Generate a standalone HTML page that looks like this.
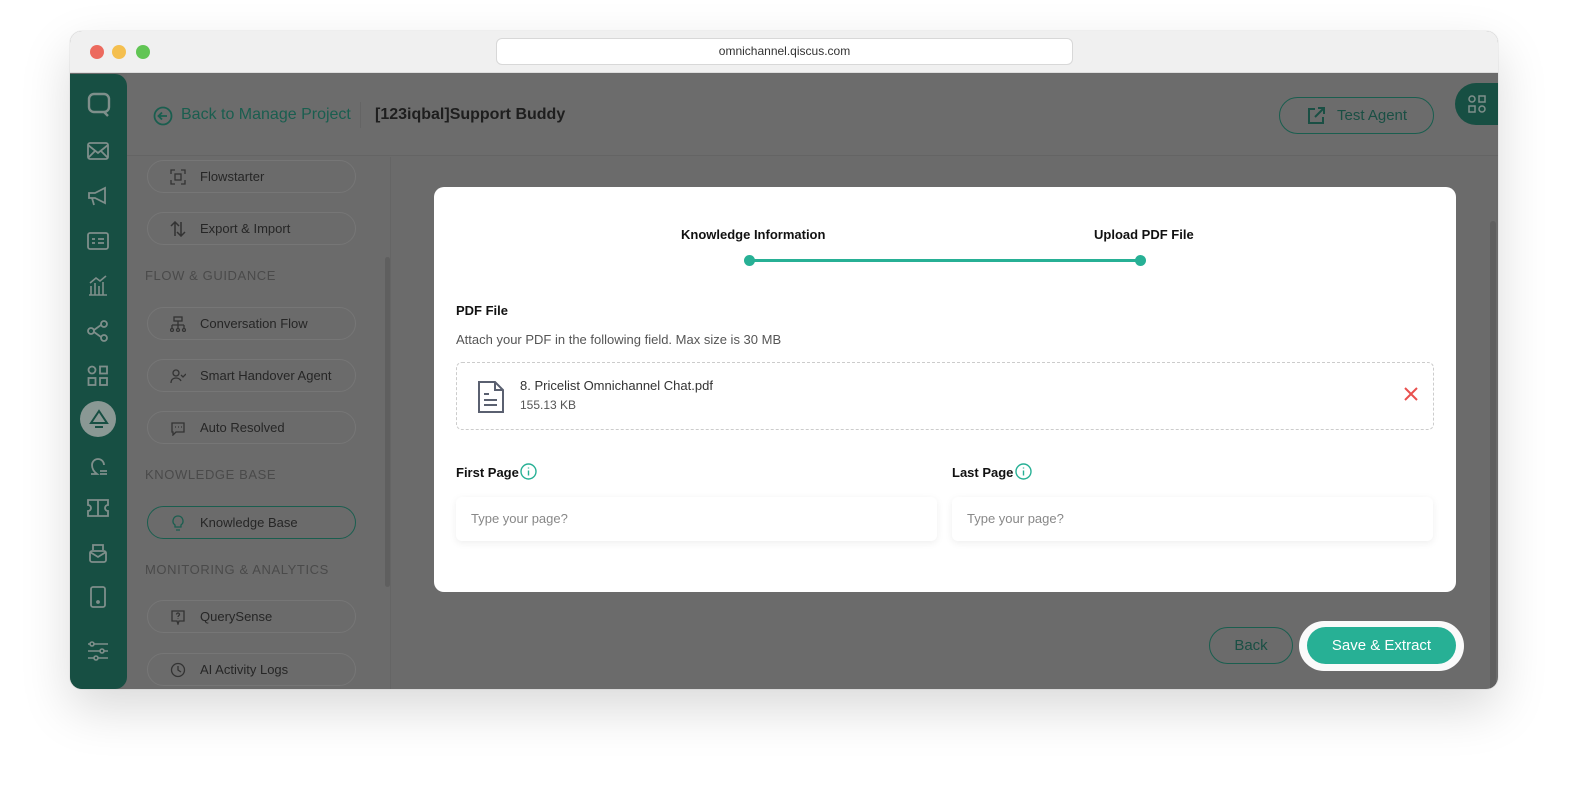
<!DOCTYPE html>
<html><head><meta charset="utf-8"><style>
*{box-sizing:border-box;margin:0;padding:0}
body{width:1580px;height:804px;background:#fff;font-family:"Liberation Sans",sans-serif;position:relative;overflow:hidden}
.win{position:absolute;left:70px;top:31px;width:1428px;height:658px;border-radius:12px;overflow:hidden;box-shadow:0 20px 50px rgba(0,0,0,.15),0 0 0 1px rgba(0,0,0,.04);background:#6b6b6b}
.title{position:absolute;left:0;top:0;width:100%;height:42px;background:#f0f0f0;border-bottom:1px solid #ddd}
.dot{position:absolute;top:14px;width:14px;height:14px;border-radius:50%}
.url{position:absolute;left:426px;top:7px;width:577px;height:27px;background:#fff;border:1px solid #d8d8d8;border-radius:6px;font-size:12px;color:#333;text-align:center;line-height:25px}
.rail{position:absolute;left:0;top:43px;width:57px;height:615px;background:#174f43;border-radius:0 12px 12px 0}
.rail svg{position:absolute;left:17px}
.hdr{position:absolute;left:57px;top:43px;right:0;height:82px;border-bottom:1px solid #646464;background:#6c6c6c}
.panel{position:absolute;left:57px;top:126px;width:264px;bottom:0;border-right:1px solid #656565}
.pill{position:absolute;left:20px;width:209px;height:33px;border:1px solid #767676;border-radius:17px;font-size:13px;color:#262626;line-height:31px;padding-left:52px}
.pill svg{position:absolute;left:22px;top:8px}
.sec{position:absolute;left:18px;font-size:13px;color:#4a4a4a;letter-spacing:.6px}
.modal{position:absolute;left:364px;top:156px;width:1022px;height:405px;background:#fff;border-radius:10px}
.lbl{position:absolute;font-size:13px;font-weight:bold;color:#111}
.inp{position:absolute;top:310px;width:481px;height:44px;border-radius:6px;box-shadow:0 2px 8px rgba(0,0,0,.07);font-size:13px;color:#888;line-height:44px;padding-left:15px}
</style></head><body>
<div class="win">
 <div class="title">
  <div class="dot" style="left:20px;background:#ec6a5e"></div>
  <div class="dot" style="left:42px;background:#f4bf4f"></div>
  <div class="dot" style="left:66px;background:#61c554"></div>
  <div class="url">omnichannel.qiscus.com</div>
 </div>
 <div class="rail">
  <svg style="top:18px" width="24" height="26" viewBox="0 0 24 26" fill="none" stroke="#7f8f8b" stroke-width="2.4"><path d="M7 2h10a5 5 0 015 5v8a5 5 0 01-5 5H7a5 5 0 01-5-5V7a5 5 0 015-5zM17 20l4 4"/></svg>
  <svg style="top:68px" width="22" height="18" viewBox="0 0 22 18" fill="none" stroke="#7f8f8b" stroke-width="1.8"><rect x="1" y="1" width="20" height="16" rx="2"/><path d="M1 3l10 8 10-8M1 16l7-7M21 16l-7-7"/></svg>
  <svg style="top:112px" width="22" height="20" viewBox="0 0 22 20" fill="none" stroke="#7f8f8b" stroke-width="1.8"><path d="M2 7h6l10-5v15L8 12H2zM5 12l2 7"/></svg>
  <svg style="top:158px" width="22" height="18" viewBox="0 0 22 18" fill="none" stroke="#7f8f8b" stroke-width="1.8"><rect x="1" y="1" width="20" height="16" rx="2"/><path d="M5 7h3M11 7h6M5 11h3M11 11h6"/></svg>
  <svg style="top:200px" width="22" height="22" viewBox="0 0 22 22" fill="none" stroke="#7f8f8b" stroke-width="1.6"><path d="M2 21h18M4 21V12M8 21V9M12 21V12M16 21V8M3 9l6-5 4 3 6-5"/></svg>
  <svg style="top:246px" width="22" height="22" viewBox="0 0 22 22" fill="none" stroke="#7f8f8b" stroke-width="1.8"><circle cx="4" cy="11" r="3"/><circle cx="17" cy="4" r="3"/><circle cx="17" cy="18" r="3"/><path d="M7 10l7-5M7 12l7 5"/></svg>
  <svg style="top:291px" width="22" height="22" viewBox="0 0 22 22" fill="none" stroke="#7f8f8b" stroke-width="1.8"><circle cx="5" cy="5" r="3.5"/><rect x="13" y="1.5" width="7" height="7"/><rect x="1.5" y="13" width="7" height="7"/><rect x="13" y="13" width="7" height="7"/></svg>
  <div style="position:absolute;left:10px;top:327px;width:36px;height:36px;border-radius:50%;background:#8a9894"></div>
  <svg style="top:334px;left:18px" width="22" height="22" viewBox="0 0 22 22" fill="none" stroke="#174f43" stroke-width="2"><path d="M11 3L3 15h16zM7 19h8"/></svg>
  <svg style="top:380px" width="22" height="22" viewBox="0 0 22 22" fill="none" stroke="#7f8f8b" stroke-width="1.8"><path d="M4 20h6c-4-3-5-6-5-9a6 6 0 0112 0M13 17h7M13 20h7"/></svg>
  <svg style="top:425px" width="22" height="18" viewBox="0 0 22 18" fill="none" stroke="#7f8f8b" stroke-width="1.8"><path d="M1 1h20v5a3 3 0 000 6v5H1v-5a3 3 0 000-6zM11 1v16"/></svg>
  <svg style="top:468px" width="22" height="22" viewBox="0 0 22 22" fill="none" stroke="#7f8f8b" stroke-width="1.8"><rect x="3" y="9" width="16" height="11" rx="2"/><path d="M3 10l8 5 8-5M6 8V3h10v5"/></svg>
  <svg style="top:512px" width="22" height="22" viewBox="0 0 22 22" fill="none" stroke="#7f8f8b" stroke-width="1.8"><rect x="4" y="1" width="14" height="20" rx="2"/><circle cx="11" cy="16" r="1"/></svg>
  <svg style="top:566px" width="22" height="22" viewBox="0 0 22 22" fill="none" stroke="#7f8f8b" stroke-width="1.6"><path d="M1 4h20M1 11h20M1 18h20"/><circle cx="5" cy="4" r="2" fill="#174f43"/><circle cx="15" cy="11" r="2" fill="#174f43"/><circle cx="9" cy="18" r="2" fill="#174f43"/></svg>
 </div>
 <div class="hdr">
  <svg style="position:absolute;left:26px;top:32px" width="20" height="20" viewBox="0 0 20 20" fill="none" stroke="#1a5e4f" stroke-width="1.8"><circle cx="10" cy="10" r="8.5"/><path d="M14 10H6M9 6.5L5.5 10 9 13.5"/></svg>
  <div style="position:absolute;left:54px;top:32px;font-size:16px;color:#1a5e4f">Back to Manage Project</div>
  <div style="position:absolute;left:233px;top:28px;width:1px;height:26px;background:#646464"></div>
  <div style="position:absolute;left:248px;top:32px;font-size:16px;font-weight:bold;color:#1e1e1e">[123iqbal]Support Buddy</div>
  <div style="position:absolute;left:1152px;top:23px;width:155px;height:37px;border:1px solid #1a5e4f;border-radius:19px;font-size:15px;color:#1a4f44;line-height:35px;padding-left:57px">Test Agent
   <svg style="position:absolute;left:26px;top:8px" width="20" height="20" viewBox="0 0 20 20" fill="none" stroke="#1a4f44" stroke-width="2"><path d="M9 3H3v14h14v-6M12 2h6v6M18 2l-9 9"/></svg></div>
  <div style="position:absolute;left:1328px;top:9px;width:50px;height:42px;border-radius:21px 0 0 21px;background:#174f43">
   <svg style="position:absolute;left:13px;top:12px" width="18" height="18" viewBox="0 0 18 18" fill="none" stroke="#7f8f8b" stroke-width="1.5"><circle cx="4" cy="4" r="3"/><rect x="11" y="1" width="6" height="6"/><rect x="1" y="11" width="6" height="6"/><circle cx="14" cy="14" r="3"/></svg></div>
 </div>
 <div class="panel">
  <div class="pill" style="top:3px">Flowstarter<svg width="16" height="16" viewBox="0 0 16 16" fill="none" stroke="#333" stroke-width="1.3"><path d="M1 5V1h4M11 1h4v4M1 11v4h4M11 15h4v-4"/><rect x="5" y="5" width="6" height="6"/></svg></div>
  <div class="pill" style="top:55px">Export &amp; Import<svg width="16" height="16" viewBox="0 0 16 16" fill="none" stroke="#333" stroke-width="1.5"><path d="M5 15V1M1 5l4-4 4 4M11 1v14M7 11l4 4 4-4"/></svg></div>
  <div class="sec" style="top:111px">FLOW &amp; GUIDANCE</div>
  <div class="pill" style="top:150px">Conversation Flow<svg width="16" height="16" viewBox="0 0 16 16" fill="none" stroke="#333" stroke-width="1.3"><rect x="4" y="1" width="8" height="4"/><path d="M8 5v4M2 9h12M2 9v3M8 9v3M14 9v3"/><circle cx="2" cy="14" r="1.5"/><circle cx="8" cy="14" r="1.5"/><circle cx="14" cy="14" r="1.5"/></svg></div>
  <div class="pill" style="top:202px">Smart Handover Agent<svg width="16" height="16" viewBox="0 0 16 16" fill="none" stroke="#333" stroke-width="1.3"><circle cx="6" cy="5" r="3"/><path d="M1 15c0-4 3-5 5-5s4 1 5 3M11 7l2 2 3-3"/></svg></div>
  <div class="pill" style="top:254px">Auto Resolved<svg width="16" height="16" viewBox="0 0 16 16" fill="none" stroke="#333" stroke-width="1.3"><path d="M2 3h12v9H6l-3 3v-3H2zM5 7h1M8 7h1M11 7h1"/></svg></div>
  <div class="sec" style="top:310px">KNOWLEDGE BASE</div>
  <div class="pill" style="top:349px;border-color:#1a5e4f">Knowledge Base<svg width="16" height="16" viewBox="0 0 16 16" fill="none" stroke="#1a5e4f" stroke-width="1.3"><path d="M8 1a5 5 0 00-3 9v2h6v-2a5 5 0 00-3-9zM6 15h4"/></svg></div>
  <div class="sec" style="top:405px">MONITORING &amp; ANALYTICS</div>
  <div class="pill" style="top:443px">QuerySense<svg width="16" height="16" viewBox="0 0 16 16" fill="none" stroke="#333" stroke-width="1.3"><path d="M2 2h12v10H9l-1 3-1-3H2zM6.5 5.5a1.5 1.5 0 113 0c0 1-1.5 1-1.5 2.5M8 9.5v.5"/></svg></div>
  <div class="pill" style="top:496px">AI Activity Logs<svg width="16" height="16" viewBox="0 0 16 16" fill="none" stroke="#333" stroke-width="1.3"><circle cx="8" cy="8" r="6.5"/><path d="M8 4v4l3 2"/></svg></div>
  <div style="position:absolute;left:258px;top:100px;width:5px;height:330px;border-radius:3px;background:#5f5f5f"></div>
 </div>
 <div style="position:absolute;left:1420px;top:190px;width:6px;height:470px;background:#5f5f5f;border-radius:3px"></div>
 <div class="modal">
  <div class="lbl" style="left:247px;top:40px">Knowledge Information</div>
  <div class="lbl" style="left:660px;top:40px">Upload PDF File</div>
  <div style="position:absolute;left:316px;top:72px;width:392px;height:3px;background:#27b095"></div>
  <div style="position:absolute;left:310px;top:68px;width:11px;height:11px;border-radius:50%;background:#27b095"></div>
  <div style="position:absolute;left:701px;top:68px;width:11px;height:11px;border-radius:50%;background:#27b095"></div>
  <div class="lbl" style="left:22px;top:116px">PDF File</div>
  <div style="position:absolute;left:22px;top:145px;font-size:13px;color:#555">Attach your PDF in the following field. Max size is 30 MB</div>
  <div style="position:absolute;left:22px;top:175px;width:978px;height:68px;border:1px dashed #ccc;border-radius:6px">
   <svg style="position:absolute;left:19px;top:16px" width="30" height="36" viewBox="0 0 30 36" fill="none" stroke="#5a6070" stroke-width="2"><path d="M3 3h16l8 8v22H3zM19 3v8h8M8 15h5M8 21h13M8 26h13"/></svg>
   <div style="position:absolute;left:63px;top:15px;font-size:13px;color:#333">8. Pricelist Omnichannel Chat.pdf</div>
   <div style="position:absolute;left:63px;top:35px;font-size:12px;color:#555">155.13 KB</div>
   <svg style="position:absolute;left:946px;top:23px" width="16" height="16" viewBox="0 0 16 16" stroke="#e8504e" stroke-width="2"><path d="M2 2l12 12M14 2L2 14"/></svg>
  </div>
  <div class="lbl" style="left:22px;top:278px">First Page</div>
  <svg style="position:absolute;left:86px;top:276px" width="17" height="17" viewBox="0 0 17 17" fill="none" stroke="#27b095" stroke-width="1.4"><circle cx="8.5" cy="8.5" r="7.5"/><path d="M8.5 7.5v5M8.5 4.5v1"/></svg>
  <div class="lbl" style="left:518px;top:278px">Last Page</div>
  <svg style="position:absolute;left:581px;top:276px" width="17" height="17" viewBox="0 0 17 17" fill="none" stroke="#27b095" stroke-width="1.4"><circle cx="8.5" cy="8.5" r="7.5"/><path d="M8.5 7.5v5M8.5 4.5v1"/></svg>
  <div class="inp" style="left:22px">Type your page?</div>
  <div class="inp" style="left:518px">Type your page?</div>
 </div>
 <div style="position:absolute;left:1139px;top:596px;width:84px;height:37px;border:1px solid #1a5e4f;border-radius:19px;font-size:15px;color:#1a4f44;text-align:center;line-height:35px">Back</div>
 <div style="position:absolute;left:1229px;top:590px;width:165px;height:50px;border-radius:25px;background:#fafafa"></div>
 <div style="position:absolute;left:1237px;top:596px;width:149px;height:37px;border-radius:19px;background:#27b095;font-size:15px;color:#fff;text-align:center;line-height:37px">Save &amp; Extract</div>
</div>
</body></html>
